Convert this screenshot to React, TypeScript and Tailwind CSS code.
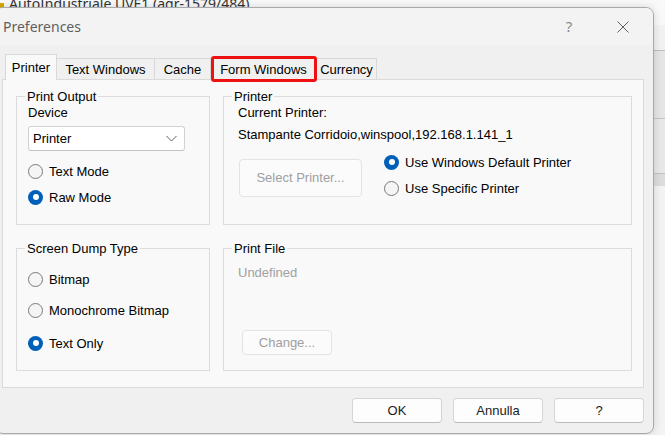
import React from "react";

function Radio({ checked, label }: { checked?: boolean; label: string }) {
  return (
    <div className="flex items-center h-[20px]">
      {checked ? (
        <span className="w-[15px] h-[15px] rounded-full bg-[#005fb8] flex items-center justify-center shrink-0">
          <span className="w-[6px] h-[6px] rounded-full bg-white" />
        </span>
      ) : (
        <span className="w-[15px] h-[15px] rounded-full border border-[#7a7a7a] bg-[#f5f5f5] shrink-0" />
      )}
      <span className="ml-[6px] leading-[15px]">{label}</span>
    </div>
  );
}

function Group({ label, className, children }: { label: string; className?: string; children?: React.ReactNode }) {
  return (
    <div className={`relative border border-[#dcdcdc] ${className ?? ""}`}>
      <span className="absolute -top-[8px] left-[8px] px-[2px] bg-[#f9f9f9] leading-[15px]">{label}</span>
      {children}
    </div>
  );
}

export default function App() {
  return (
    <div className="relative w-[665px] h-[435px] overflow-hidden bg-[#f0f0f0] font-['Liberation_Sans',Arial,sans-serif] text-[13px] text-black">
      {/* background window */}
      <div className="flex flex-col h-full">
        <div className="h-[25px] bg-[#f9f9f9] flex items-start overflow-hidden">
          <span className="w-[4px] h-[5px] bg-[#d9a800] mt-[3px]" />
          <span className="ml-[5px] -mt-[6px] font-['Noto_Sans',sans-serif] text-[14px] leading-[20px] text-[#333333] whitespace-nowrap">
            AutoIndustriale UVE1 (agr-1579/484)
          </span>
        </div>
        <div className="h-[25px] bg-[#f2f2f2]" />
        <div className="h-[68px] bg-[#e5e5e5] border-t border-[#bdbdbd]" />
        <div className="h-[55px] bg-[#e8e8e8] border-t border-[#c4c4c4]" />
        <div className="h-[13px] bg-[#dcdcdc] border-t border-[#c4c4c4]" />
        <div className="flex-1 bg-[#f3f3f3]" />
      </div>

      {/* dialog */}
      <div className="absolute left-[-5px] top-[7px] w-[659px] h-[427px] rounded-[8px] border border-[#a8a8a8] bg-[#f0f0f0] shadow-[0_0_8px_rgba(0,0,0,0.15)] flex flex-col overflow-hidden">
        {/* title bar */}
        <div className="h-[37px] bg-[#f3f3f3] flex items-center shrink-0">
          <span className="pl-[7px] flex-1 font-['Noto_Sans',sans-serif] text-[14px] text-[#5f5f5f]">Preferences</span>
          <span className="w-[46px] flex justify-center font-['Noto_Sans',sans-serif] text-[15px] text-[#8a8a8a]">?</span>
          <span className="w-[61px] flex justify-center">
            <svg width="12" height="12" viewBox="0 0 12 12">
              <path d="M0.5 0.5 L11.5 11.5 M11.5 0.5 L0.5 11.5" stroke="#5f5f5f" strokeWidth="1" fill="none" />
            </svg>
          </span>
        </div>

        {/* tabs */}
        <div className="mt-[9px] h-[26px] flex items-end pl-[9px] shrink-0">
          <div className="relative z-10 w-[52px] h-[26px] bg-[#f9f9f9] border border-b-0 border-[#d9d9d9] flex items-center justify-center">
            Printer
          </div>
          <div className="w-[98px] h-[22px] bg-[#f0f0f0] border-t border-r border-[#d9d9d9] flex items-center justify-center">
            Text Windows
          </div>
          <div className="w-[56px] h-[22px] bg-[#f0f0f0] border-t border-r border-[#d9d9d9] flex items-center justify-center">
            Cache
          </div>
          <div className="relative w-[106px] h-[22px] bg-[#f0f0f0] border-t border-r border-[#d9d9d9] flex items-center justify-center">
            Form Windows
            <span className="absolute left-0 right-[-1px] -top-[3px] -bottom-[2px] border-[3px] border-[#ee1111] rounded-[3px]" />
          </div>
          <div className="w-[60px] h-[22px] bg-[#f0f0f0] border-t border-r border-[#d9d9d9] flex items-center justify-center">
            Currency
          </div>
        </div>

        {/* panel */}
        <div className="-mt-px ml-[6px] w-[642px] h-[309px] border border-[#dadada] bg-[#f9f9f9] pl-[13px] pt-[16px] shrink-0">
          <div className="grid grid-cols-[194px_409px] grid-rows-[129px_123px] gap-x-[13px] gap-y-[23px]">
            <Group label="Print Output" className="px-[11px] pt-[8px]">
              <div className="leading-[15px]">Device</div>
              <div className="mt-[6px] h-[25px] w-[157px] bg-white border border-[#d2d2d2] border-b-[#c2c2c2] rounded-[3px] flex items-center justify-between pl-[4px] pr-[7px]">
                <span>Printer</span>
                <svg width="11" height="7" viewBox="0 0 11 7">
                  <path d="M0.5 1 L5.5 6 L10.5 1" stroke="#606060" strokeWidth="1" fill="none" />
                </svg>
              </div>
              <div className="mt-[10px] flex flex-col gap-[6px]">
                <Radio label="Text Mode" />
                <Radio checked label="Raw Mode" />
              </div>
            </Group>

            <Group label="Printer" className="pl-[14px] pt-[8px]">
              <div className="leading-[15px]">Current Printer:</div>
              <div className="mt-[7px] leading-[15px]">Stampante Corridoio,winspool,192.168.1.141_1</div>
              <div className="mt-[10px] flex items-start">
                <div className="ml-[1px] mt-[7px] w-[123px] h-[38px] border border-[#e3e3e3] bg-[#fbfbfb] rounded-[4px] flex items-center justify-center text-[#9f9f9f]">
                  Select Printer...
                </div>
                <div className="ml-[22px] flex flex-col gap-[6px]">
                  <Radio checked label="Use Windows Default Printer" />
                  <Radio label="Use Specific Printer" />
                </div>
              </div>
            </Group>

            <Group label="Screen Dump Type" className="px-[11px] pt-[20px]">
              <Radio label="Bitmap" />
              <div className="mt-[11px]">
                <Radio label="Monochrome Bitmap" />
              </div>
              <div className="mt-[13px]">
                <Radio checked label="Text Only" />
              </div>
            </Group>

            <Group label="Print File" className="pl-[14px] pt-[16px]">
              <div className="leading-[15px] text-[#a0a0a0]">Undefined</div>
              <div className="ml-[4px] mt-[50px] w-[90px] h-[25px] border border-[#e3e3e3] bg-[#fbfbfb] rounded-[4px] flex items-center justify-center text-[#9f9f9f]">
                Change...
              </div>
            </Group>
          </div>
        </div>

        {/* buttons */}
        <div className="mt-[10px] flex justify-end gap-[11px] pr-[9px]">
          {["OK", "Annulla", "?"].map((t) => (
            <div
              key={t}
              className="w-[90px] h-[25px] bg-[#fdfdfd] border border-[#d5d5d5] border-b-[#bcbcbc] rounded-[4px] flex items-center justify-center text-[#1b1b1b]"
            >
              {t}
            </div>
          ))}
        </div>
      </div>
    </div>
  );
}
